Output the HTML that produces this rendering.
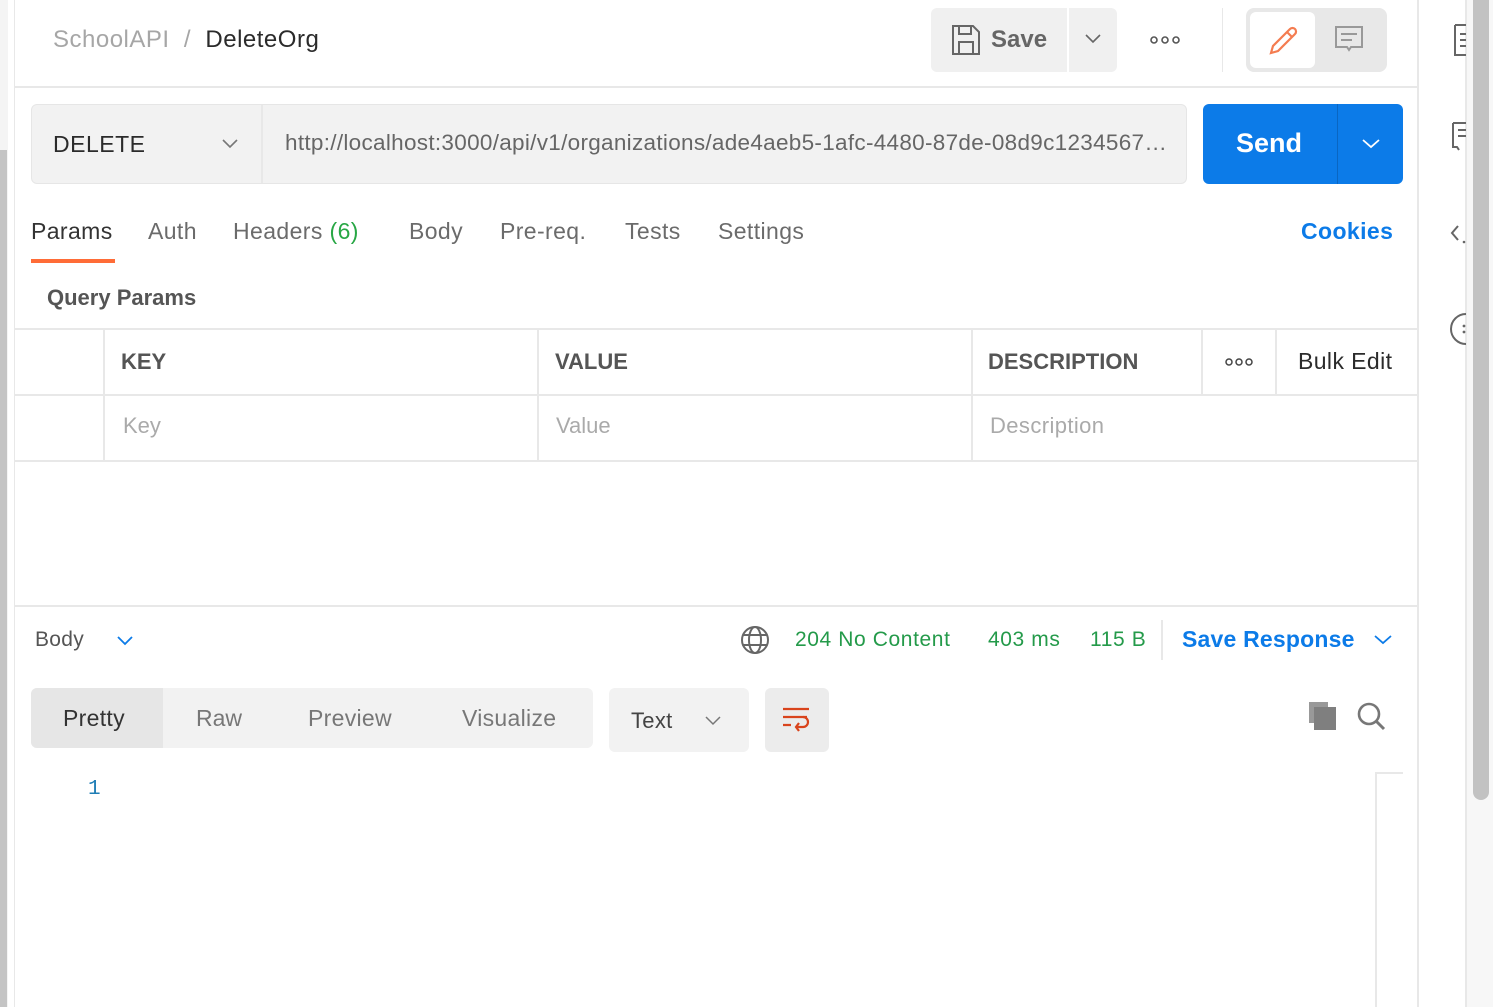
<!DOCTYPE html>
<html><head><meta charset="utf-8"><style>
*{margin:0;padding:0;box-sizing:border-box}
body{width:1493px;height:1007px;overflow:hidden;background:#fff;font-family:"Liberation Sans",sans-serif;position:relative;color:#555}
.a{position:absolute;white-space:nowrap}
.t{font-size:23px;color:#6b6b6b;top:218px;letter-spacing:0.4px}
.hl{position:absolute;background:#e8e8e8}
</style></head><body>
<div class="a" style="left:0;top:0;width:8px;height:1007px;background:#f4f4f4"></div>
<div class="a" style="left:0;top:150px;width:7px;height:857px;background:#c4c4c4"></div>
<div class="hl" style="left:14px;top:0;width:1px;height:1007px"></div>
<div class="hl" style="left:1417px;top:0;width:2px;height:1007px"></div>
<div class="a" style="left:1465px;top:0;width:28px;height:1007px;background:#f7f7f7"></div>
<div class="hl" style="left:1465px;top:0;width:2px;height:1007px"></div>
<div class="a" style="left:1473px;top:0;width:16px;height:800px;background:#c2c2c2;border-radius:0 0 8px 8px"></div>
<svg class="a" style="left:1452px;top:22px" width="14" height="36"><path d="M3 3h11M3 3v30h11M8 12h6M8 18h6M8 24h6" stroke="#666" stroke-width="2" fill="none"/></svg>
<svg class="a" style="left:1450px;top:120px" width="16" height="32"><path d="M3 3h13M3 3v24h4l2 3M8 10h8M8 16h8" stroke="#666" stroke-width="2" fill="none"/></svg>
<svg class="a" style="left:1450px;top:222px" width="16" height="24"><path d="M8 4l-6 7 6 7" stroke="#666" stroke-width="2" fill="none"/><circle cx="14" cy="20" r="1.3" fill="#666"/></svg>
<svg class="a" style="left:1450px;top:312px" width="16" height="34"><path d="M16 2a14 14 0 0 0 0 30" stroke="#666" stroke-width="2" fill="none"/><circle cx="14" cy="14" r="1.4" fill="#666"/><circle cx="14" cy="20" r="1.4" fill="#666"/></svg>

<div class="a" style="left:53px;top:26px;font-size:24px;color:#a6a6a6;letter-spacing:0.5px">SchoolAPI&nbsp; /&nbsp; <span style="color:#2b2b2b">DeleteOrg</span></div>
<div class="a" style="left:931px;top:8px;width:136px;height:64px;background:#f0f0f0;border-radius:6px 0 0 6px"></div>
<svg class="a" style="left:951px;top:24px" width="30" height="32"><path d="M2 2h20l6 6v22H2z M8 2v8h12V2 M8 30V18h14v12" stroke="#666" stroke-width="2" fill="none"/></svg>
<div class="a" style="left:991px;top:26px;font-size:24px;color:#666;font-weight:bold">Save</div>
<div class="a" style="left:1069px;top:8px;width:48px;height:64px;background:#f0f0f0;border-radius:0 6px 6px 0"></div>
<svg class="a" style="left:1085px;top:34px" width="16" height="10"><path d="M1 1l7 7 7-7" stroke="#666" stroke-width="1.6" fill="none"/></svg>
<svg class="a" style="left:1150px;top:35px" width="30" height="10"><g stroke="#555" stroke-width="1.6" fill="none"><circle cx="4" cy="5" r="3"/><circle cx="15" cy="5" r="3"/><circle cx="26" cy="5" r="3"/></g></svg>
<div class="hl" style="left:1222px;top:8px;width:1px;height:64px"></div>
<div class="a" style="left:1246px;top:8px;width:141px;height:64px;background:#e8e8e8;border-radius:8px"></div>
<div class="a" style="left:1250px;top:12px;width:65px;height:56px;background:#fff;border-radius:6px"></div>
<svg class="a" style="left:1268px;top:24px" width="32" height="32"><path d="M3 29l2-7L22 5a3 3 0 0 1 5 5L10 27z M19 8l5 5" stroke="#f47c50" stroke-width="2.2" fill="none"/></svg>
<svg class="a" style="left:1334px;top:25px" width="30" height="30"><path d="M2 2h26v20H17l-2 3-2-3H2z M7 9h16M7 15h11" stroke="#999" stroke-width="2" fill="none"/></svg>
<div class="hl" style="left:15px;top:86px;width:1402px;height:2px"></div>

<div class="a" style="left:31px;top:104px;width:1156px;height:80px;background:#f2f2f2;border:1px solid #e6e6e6;border-radius:6px"></div>
<div class="hl" style="left:261px;top:105px;width:2px;height:78px"></div>
<div class="a" style="left:53px;top:131px;font-size:23px;color:#2b2b2b;letter-spacing:0.5px">DELETE</div>
<svg class="a" style="left:222px;top:139px" width="16" height="10"><path d="M1 1l7 7 7-7" stroke="#777" stroke-width="1.6" fill="none"/></svg>
<div class="a" style="left:285px;top:130px;font-size:22.5px;color:#666;width:882px;overflow:hidden;text-overflow:ellipsis;letter-spacing:0.3px">http://localhost:3000/api/v1/organizations/ade4aeb5-1afc-4480-87de-08d9c1234567abcdef</div>
<div class="a" style="left:1203px;top:104px;width:200px;height:80px;background:#0c7be8;border-radius:6px"></div>
<div class="a" style="left:1337px;top:104px;width:1px;height:80px;background:#0a66c2"></div>
<div class="a" style="left:1236px;top:128px;font-size:27px;color:#fff;font-weight:bold">Send</div>
<svg class="a" style="left:1362px;top:139px" width="18" height="10"><path d="M1 1l8 7 8-7" stroke="#fff" stroke-width="1.8" fill="none"/></svg>

<div class="a t" style="left:31px;color:#333">Params</div>
<div class="a" style="left:31px;top:259px;width:84px;height:4px;background:#ff6c37"></div>
<div class="a t" style="left:148px">Auth</div>
<div class="a t" style="left:233px">Headers <span style="color:#28a745">(6)</span></div>
<div class="a t" style="left:409px">Body</div>
<div class="a t" style="left:500px">Pre-req.</div>
<div class="a t" style="left:625px">Tests</div>
<div class="a t" style="left:718px">Settings</div>
<div class="a t" style="left:1301px;color:#0c7be8;font-weight:bold">Cookies</div>
<div class="a" style="left:47px;top:285px;font-size:22px;color:#555;font-weight:bold">Query Params</div>

<div class="hl" style="left:15px;top:328px;width:1402px;height:2px"></div>
<div class="hl" style="left:15px;top:394px;width:1402px;height:2px"></div>
<div class="hl" style="left:15px;top:460px;width:1402px;height:2px"></div>
<div class="hl" style="left:103px;top:330px;width:2px;height:130px"></div>
<div class="hl" style="left:537px;top:330px;width:2px;height:130px"></div>
<div class="hl" style="left:971px;top:330px;width:2px;height:130px"></div>
<div class="hl" style="left:1201px;top:330px;width:2px;height:64px"></div>
<div class="hl" style="left:1275px;top:330px;width:2px;height:64px"></div>
<div class="a" style="left:121px;top:349px;font-size:22px;color:#555;font-weight:bold">KEY</div>
<div class="a" style="left:555px;top:349px;font-size:22px;color:#555;font-weight:bold">VALUE</div>
<div class="a" style="left:988px;top:349px;font-size:22px;color:#555;font-weight:bold">DESCRIPTION</div>
<svg class="a" style="left:1225px;top:357px" width="28" height="10"><g stroke="#444" stroke-width="1.5" fill="none"><circle cx="4" cy="5" r="3"/><circle cx="14" cy="5" r="3"/><circle cx="24" cy="5" r="3"/></g></svg>
<div class="a" style="left:1298px;top:348px;font-size:23px;color:#2b2b2b;letter-spacing:0.4px">Bulk Edit</div>
<div class="a" style="left:123px;top:413px;font-size:22px;color:#aaa">Key</div>
<div class="a" style="left:556px;top:413px;font-size:22px;color:#aaa">Value</div>
<div class="a" style="left:990px;top:413px;font-size:22px;color:#aaa;letter-spacing:0.4px">Description</div>

<div class="hl" style="left:15px;top:605px;width:1402px;height:2px"></div>
<div class="a" style="left:35px;top:628px;font-size:21px;color:#555;letter-spacing:0.3px">Body</div>
<svg class="a" style="left:117px;top:636px" width="16" height="10"><path d="M1 1l7 7 7-7" stroke="#0c7be8" stroke-width="1.8" fill="none"/></svg>
<svg class="a" style="left:740px;top:625px" width="30" height="30"><g stroke="#666" stroke-width="2" fill="none"><circle cx="15" cy="15" r="13"/><ellipse cx="15" cy="15" rx="6" ry="13"/><path d="M3 10h24M3 20h24"/></g></svg>
<div class="a" style="left:795px;top:628px;font-size:21px;color:#249a4a;letter-spacing:0.6px">204 No Content</div>
<div class="a" style="left:988px;top:628px;font-size:21px;color:#249a4a;letter-spacing:0.6px">403 ms</div>
<div class="a" style="left:1090px;top:628px;font-size:21px;color:#249a4a;letter-spacing:0.6px">115 B</div>
<div class="hl" style="left:1161px;top:620px;width:2px;height:40px"></div>
<div class="a" style="left:1182px;top:626px;font-size:23px;color:#0c7be8;font-weight:bold;letter-spacing:0.2px">Save Response</div>
<svg class="a" style="left:1374px;top:635px" width="18" height="10"><path d="M1 1l8 7 8-7" stroke="#0c7be8" stroke-width="1.8" fill="none"/></svg>

<div class="a" style="left:31px;top:688px;width:562px;height:60px;background:#f2f2f2;border-radius:6px"></div>
<div class="a" style="left:31px;top:688px;width:132px;height:60px;background:#e6e6e6;border-radius:6px 0 0 6px"></div>
<div class="a" style="left:63px;top:705px;font-size:23px;color:#333;letter-spacing:0.3px">Pretty</div>
<div class="a" style="left:196px;top:705px;font-size:23px;color:#777">Raw</div>
<div class="a" style="left:308px;top:705px;font-size:23px;color:#777;letter-spacing:0.3px">Preview</div>
<div class="a" style="left:462px;top:705px;font-size:23px;color:#777;letter-spacing:0.3px">Visualize</div>
<div class="a" style="left:609px;top:688px;width:140px;height:64px;background:#f2f2f2;border-radius:6px"></div>
<div class="a" style="left:631px;top:708px;font-size:22px;color:#444;letter-spacing:0.3px">Text</div>
<svg class="a" style="left:705px;top:716px" width="16" height="10"><path d="M1 1l7 7 7-7" stroke="#777" stroke-width="1.5" fill="none"/></svg>
<div class="a" style="left:765px;top:688px;width:64px;height:64px;background:#ececec;border-radius:6px"></div>
<svg class="a" style="left:781px;top:706px" width="32" height="30"><g stroke="#d9441c" stroke-width="2.2" fill="none"><path d="M2 3h26M2 11h24M2 19h8"/><path d="M22 11a5 5 0 0 1 0 10h-7M18 17l-3 4 3 4"/></g></svg>
<svg class="a" style="left:1308px;top:701px" width="30" height="30"><rect x="1" y="1" width="19" height="21" fill="#999"/><rect x="6" y="6" width="22" height="23" fill="#7f7f7f"/></svg>
<svg class="a" style="left:1356px;top:701px" width="32" height="32"><circle cx="13" cy="13" r="10" stroke="#777" stroke-width="2.6" fill="none"/><path d="M20 20l8 8" stroke="#777" stroke-width="3"/></svg>
<div class="a" style="left:88px;top:778px;font-size:21px;color:#1f7db5;font-family:'Liberation Mono',monospace">1</div>
<div class="hl" style="left:1375px;top:772px;width:2px;height:235px"></div>
<div class="hl" style="left:1375px;top:772px;width:28px;height:2px"></div>
</body></html>
